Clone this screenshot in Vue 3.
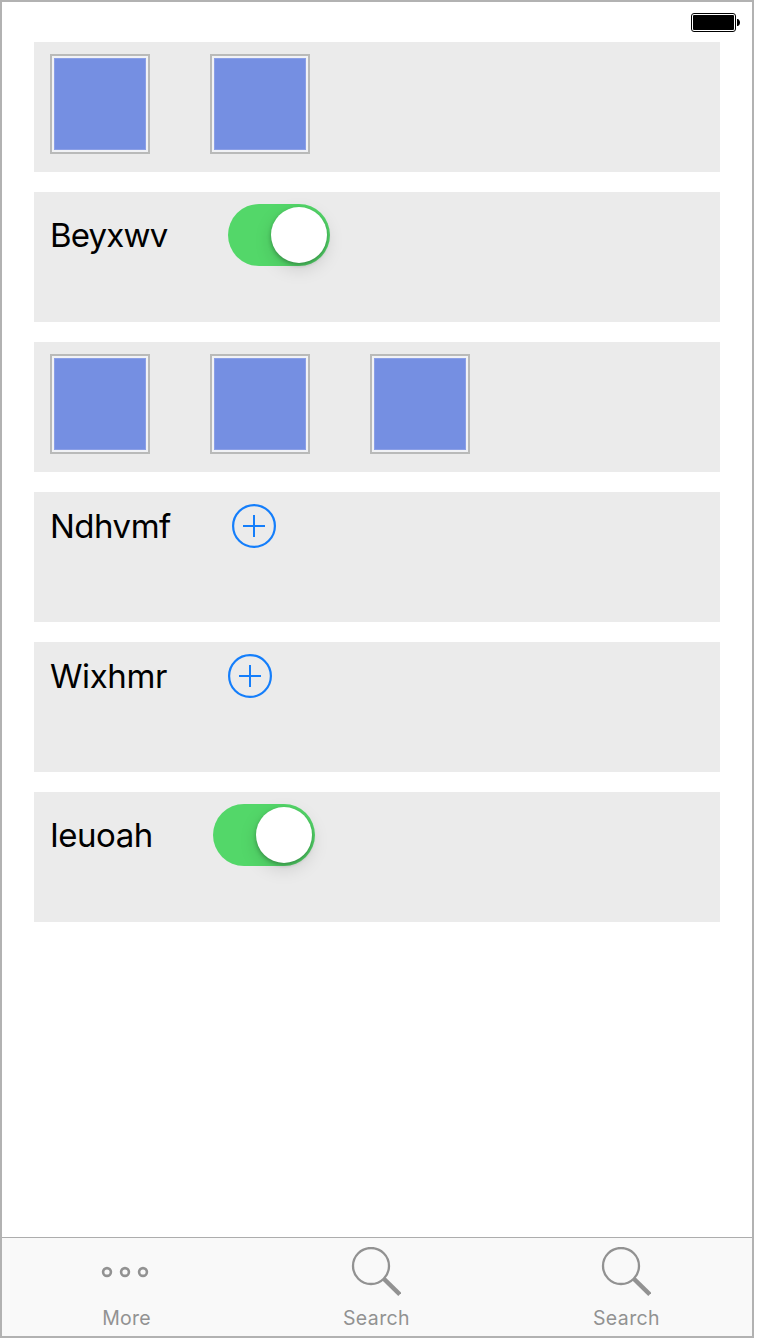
<script setup>
const rows = [
  { kind: 'tiles', count: 2 },
  { kind: 'switch', label: 'Beyxwv' },
  { kind: 'tiles', count: 3 },
  { kind: 'add', label: 'Ndhvmf' },
  { kind: 'add', label: 'Wixhmr' },
  { kind: 'switch', label: 'Ieuoah' },
]
const tabs = [
  { icon: 'more', label: 'More' },
  { icon: 'search', label: 'Search' },
  { icon: 'search', label: 'Search' },
]
</script>

<template>
  <div class="screen">
    <header class="status">
      <svg class="battery" width="50" height="20" viewBox="0 0 50 20">
        <rect x="0.5" y="0.5" width="44" height="18" rx="2.5" fill="#fff" stroke="#000" />
        <rect x="2" y="2" width="41" height="15" rx="1" fill="#000" />
        <path d="M46 6h.7C48.3 6.5 49 8 49 9.5S48.3 12.5 46.7 13H46z" fill="#000" />
      </svg>
    </header>
    <main class="list">
      <section v-for="(row, i) in rows" :key="i" class="row" :class="row.kind">
        <template v-if="row.kind === 'tiles'">
          <div v-for="n in row.count" :key="n" class="tile"><div class="fill"></div></div>
        </template>
        <template v-else>
          <span class="label" :class="row.label.toLowerCase()">{{ row.label }}</span>
          <div v-if="row.kind === 'switch'" class="toggle"><div class="knob"></div></div>
          <svg v-else class="plus" width="44" height="44" viewBox="0 0 44 44" fill="none" stroke="#147efb" stroke-width="2">
            <circle cx="22" cy="22" r="20.9" stroke-width="2.2" />
            <path d="M11 22h22M22 11v22" />
          </svg>
        </template>
      </section>
    </main>
    <nav class="tabs">
      <div v-for="(tab, i) in tabs" :key="i" class="tab">
        <svg v-if="tab.icon === 'more'" width="50" height="50" viewBox="0 0 50 50" fill="none" stroke="#929292" stroke-width="2.6">
          <circle cx="6" cy="25" r="3.9" />
          <circle cx="24" cy="25" r="3.9" />
          <circle cx="42" cy="25" r="3.9" />
        </svg>
        <svg v-else width="50" height="50" viewBox="0 0 50 50" fill="none" stroke="#929292">
          <circle cx="20" cy="19" r="18" stroke-width="2.3" />
          <path d="M32.4 31.4L48.8 47.4" stroke-width="4.3" />
        </svg>
        <span class="caption" :class="tab.icon">{{ tab.label }}</span>
      </div>
    </nav>
  </div>
</template>

<style>
body {
  background: #fff;
}
</style>

<style scoped>
.screen {
  box-sizing: border-box;
  width: 754px;
  height: 1338px;
  border: 2px solid #b2b2b2;
  background: #fff;
  display: flex;
  flex-direction: column;
  font-family: Inter, "Liberation Sans", sans-serif;
}
.status {
  height: 40px;
  display: flex;
  justify-content: flex-end;
  padding: 11px 11px 0 0;
  box-sizing: border-box;
}
.list {
  flex: 1;
  display: flex;
  flex-direction: column;
  gap: 20px;
  padding: 0 32px;
}
.row {
  box-sizing: border-box;
  height: 130px;
  background: #ebebeb;
  padding: 12px 16px;
  display: flex;
  align-items: flex-start;
  gap: 60px;
}
.tile {
  box-sizing: border-box;
  width: 100px;
  height: 100px;
  border: 2px solid #b9bab9;
  background: #f1f2f5;
  padding: 2px;
}
.fill {
  box-sizing: border-box;
  height: 92px;
  border: 1px solid #8b9fe6;
  background: #758fe2;
}
.label {
  font-size: 33px;
  line-height: 44px;
  color: #000;
  white-space: nowrap;
  width: 118px;
}
.switch .label {
  line-height: 62px;
}
.label.beyxwv {
  letter-spacing: -0.8px;
}
.label.ndhvmf {
  width: 122px;
  letter-spacing: -0.5px;
}
.label.wixhmr {
  letter-spacing: -0.4px;
}
.label.ieuoah {
  width: 103px;
  letter-spacing: -0.5px;
}
.toggle {
  box-sizing: border-box;
  width: 102px;
  height: 62px;
  border-radius: 31px;
  background: #53d769;
  padding: 3px;
  display: flex;
  justify-content: flex-end;
}
.knob {
  width: 56px;
  height: 56px;
  border-radius: 50%;
  background: #fff;
  box-shadow: 0 6px 18px rgba(0, 0, 0, 0.13), 0 2px 4px rgba(0, 0, 0, 0.28);
}
.tabs {
  box-sizing: border-box;
  height: 99px;
  border-top: 1px solid #adadad;
  background: #f9f9f9;
  display: grid;
  grid-template-columns: repeat(3, 250px);
}
.tab {
  display: flex;
  flex-direction: column;
  align-items: center;
  padding: 9px 2px 0 0;
}
.caption {
  margin: 9px 0 0 1px;
  font-size: 19.5px;
  line-height: 24px;
  letter-spacing: 0.4px;
  color: #929292;
}
.caption.more {
  letter-spacing: 0.2px;
}
</style>
